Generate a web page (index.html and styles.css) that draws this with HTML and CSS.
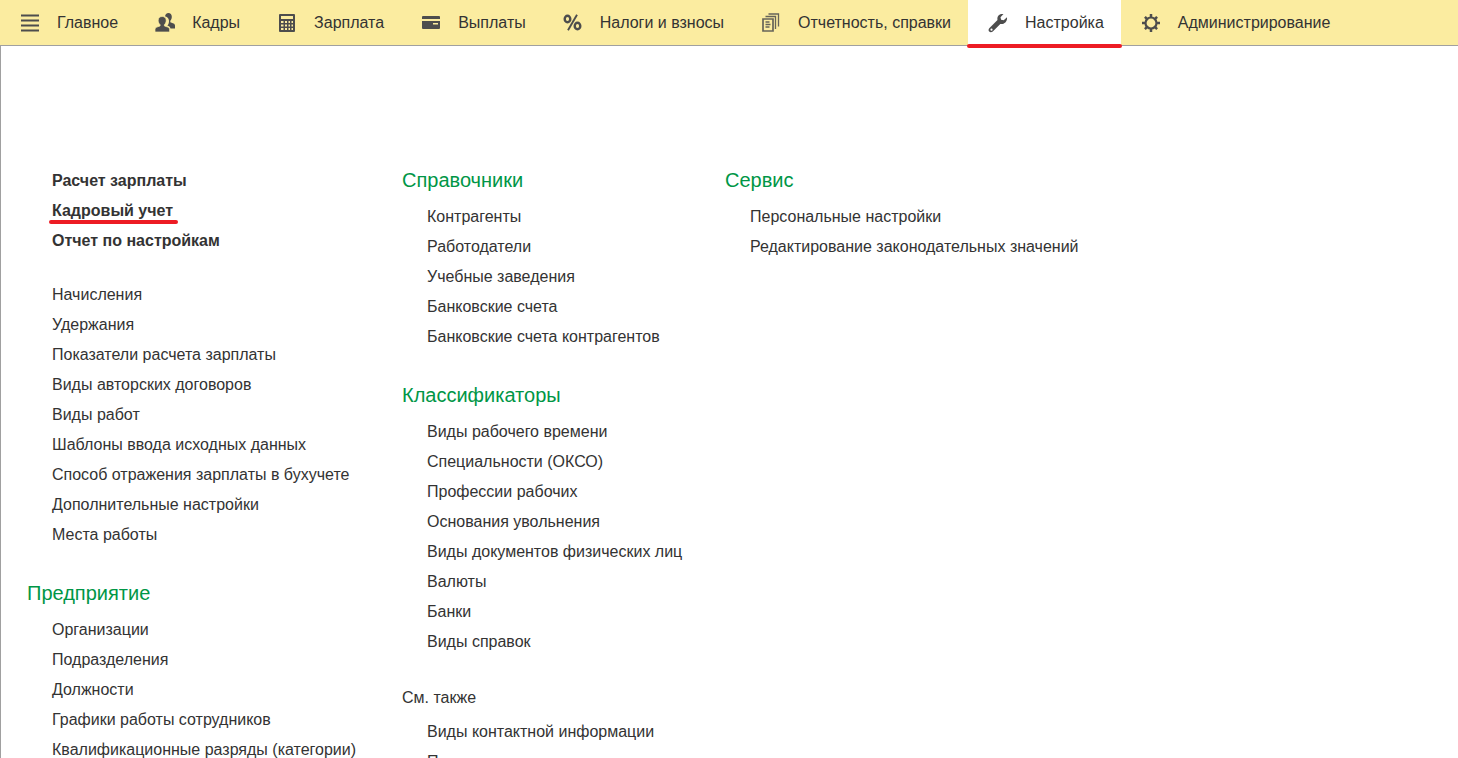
FILE: index.html
```html
<!DOCTYPE html>
<html lang="ru">
<head>
<meta charset="utf-8">
<title>Настройка</title>
<link rel="stylesheet" href="styles.css">
</head>
<body>
<nav class="sections">
  <a class="section" href="#"><svg class="icon" viewBox="0 0 20 20"><path d="M1 2.500h18M1 7.500h18M1 12.500h18M1 17.500h18" fill="none" stroke="currentColor" stroke-width="2"/></svg>Главное</a>
  <a class="section" href="#"><svg class="icon" viewBox="0 0 20 20"><g fill="currentColor"><path d="M10 3.200C10.500.7 12 0 13.200 0c2.300 0 3.600 1.500 3.600 3.800 0 1.700-.6 3.100-1.500 4v1.500l3.200 1.200c1.100.4 1.500 1.200 1.500 2.300v2.700h-4.500c-.5-1.600-1.500-2.300-3.100-2.900 1-.9 1.600-2.500 1.600-4.600 0-2.300-1.300-4.300-4-4.800z"/><path d="M7.200 3.500c2.400 0 4 1.500 4 3.800 0 1.900-.7 3.500-1.800 4.400v1.200l3.300 1.200c1.300.5 1.900 1.300 1.900 2.600V19H0v-2.300c0-1.300.7-2.100 1.900-2.600l3.200-1.200v-1.200c-1.200-.9-1.900-2.500-1.900-4.400 0-2.300 1.600-3.800 4-3.800z" stroke="#fbeca0" stroke-width=".7"/></g></svg>Кадры</a>
  <a class="section" href="#"><svg class="icon" viewBox="0 0 20 20"><path fill="currentColor" fill-rule="evenodd" d="M3 1h14q1 0 1 1v16q0 1-1 1H3q-1 0-1-1V2q0-1 1-1zM4 3v3h12V3zM4 8v2h2.500V8zM8 8v2h2V8zM11.500 8v2h1.500V8zM14.500 8v2H16V8zM4 11.500v2h2.500v-2zM8 11.500v2h2v-2zM11.500 11.500v2h1.500v-2zM14.500 11.500v2H16v-2zM4 15v2h2.500v-2zM8 15v2h2v-2zM11.500 15v2h1.500v-2zM14.500 15v2H16v-2z"/></svg>Зарплата</a>
  <a class="section" href="#"><svg class="icon" viewBox="0 0 20 20"><path fill="currentColor" fill-rule="evenodd" d="M2 3h16q1 0 1 1v2H1V4q0-1 1-1zM1 8h18v7q0 1-1 1H2q-1 0-1-1zM12 10v1.500h5V10z"/></svg>Выплаты</a>
  <a class="section" href="#"><svg class="icon" viewBox="0 0 20 20"><g fill="none" stroke="currentColor"><ellipse cx="4.500" cy="6" rx="2.800" ry="3.200" stroke-width="2.400"/><ellipse cx="14.500" cy="13" rx="2.800" ry="3.200" stroke-width="2.400"/><path d="M14 1.800l-9 15.400" stroke-width="1.900"/></g></svg>Налоги и взносы</a>
  <a class="section" href="#"><svg class="icon" viewBox="0 0 20 20"><g fill="none" stroke="currentColor" stroke-width="1.300" opacity=".85"><path d="M2 6h10v12H2z" stroke-width="1.700"/><path d="M4.500 3.500h10V16M7.500 1h10v12.500"/><path d="M4.500 9h4M4.500 11.500h5M4.500 14h4"/></g></svg>Отчетность, справки</a>
  <a class="section section-active" href="#" aria-current="page"><svg class="icon" viewBox="0 0 20 20"><path fill="currentColor" fill-rule="evenodd" d="M15.500 1c-4-.6-6.800 2-6 6L1.500 15c-2.600 2.800.8 5.800 3.300 3.500l7.500-7.600c4 .6 7.200-2.400 6.700-6.600l-3.300 3-2.600-.6-.6-2.500zM3.500 15.600a1.100 1.100 0 1 1 0 2.200a1.100 1.100 0 0 1 0-2.200z"/></svg>Настройка</a>
  <a class="section" href="#"><svg class="icon" viewBox="0 0 20 20"><g fill="none" stroke="currentColor"><circle cx="10" cy="10" r="5.500" stroke-width="2.200"/><path d="M10 1v3.500M10 15.500V19M1 10h3.500M15.500 10H19M3.900 3.900l2.300 2.300M13.800 13.800l2.300 2.300M16.100 3.900l-2.300 2.300M6.200 13.800l-2.300 2.300" stroke-width="2.500"/></g></svg>Администрирование</a>
</nav>
<main class="menu">
  <div class="column">
    <ul class="links links-main">
      <li><a href="#">Расчет зарплаты</a></li>
      <li><a class="marked" href="#">Кадровый учет</a></li>
      <li><a href="#">Отчет по настройкам</a></li>
    </ul>
    <ul class="links">
      <li><a href="#">Начисления</a></li>
      <li><a href="#">Удержания</a></li>
      <li><a href="#">Показатели расчета зарплаты</a></li>
      <li><a href="#">Виды авторских договоров</a></li>
      <li><a href="#">Виды работ</a></li>
      <li><a href="#">Шаблоны ввода исходных данных</a></li>
      <li><a href="#">Способ отражения зарплаты в бухучете</a></li>
      <li><a href="#">Дополнительные настройки</a></li>
      <li><a href="#">Места работы</a></li>
    </ul>
    <h2 class="title">Предприятие</h2>
    <ul class="links">
      <li><a href="#">Организации</a></li>
      <li><a href="#">Подразделения</a></li>
      <li><a href="#">Должности</a></li>
      <li><a href="#">Графики работы сотрудников</a></li>
      <li><a href="#">Квалификационные разряды (категории)</a></li>
    </ul>
  </div>
  <div class="column">
    <h2 class="title">Справочники</h2>
    <ul class="links">
      <li><a href="#">Контрагенты</a></li>
      <li><a href="#">Работодатели</a></li>
      <li><a href="#">Учебные заведения</a></li>
      <li><a href="#">Банковские счета</a></li>
      <li><a href="#">Банковские счета контрагентов</a></li>
    </ul>
    <h2 class="title">Классификаторы</h2>
    <ul class="links">
      <li><a href="#">Виды рабочего времени</a></li>
      <li><a href="#">Специальности (ОКСО)</a></li>
      <li><a href="#">Профессии рабочих</a></li>
      <li><a href="#">Основания увольнения</a></li>
      <li><a href="#">Виды документов физических лиц</a></li>
      <li><a href="#">Валюты</a></li>
      <li><a href="#">Банки</a></li>
      <li><a href="#">Виды справок</a></li>
    </ul>
    <h2 class="title title-also">См. также</h2>
    <ul class="links">
      <li><a href="#">Виды контактной информации</a></li>
      <li><a href="#">П</a></li>
    </ul>
  </div>
  <div class="column">
    <h2 class="title">Сервис</h2>
    <ul class="links">
      <li><a href="#">Персональные настройки</a></li>
      <li><a href="#">Редактирование законодательных значений</a></li>
    </ul>
  </div>
</main>
</body>
</html>
```
FILE: styles.css
```css
* {
  box-sizing: border-box;
}

body {
  display: flex;
  flex-direction: column;
  height: 100vh;
  margin: 0;
  overflow: hidden;
  background: #fff;
  color: #333;
  font: 16px/30px "Liberation Sans", Arial, sans-serif;
}

a {
  color: inherit;
  text-decoration: none;
}

.sections {
  display: flex;
  flex: none;
  background: #fbeca0;
  border-bottom: 1px solid #a0a0a0;
  white-space: nowrap;
}

.section {
  position: relative;
  display: flex;
  align-items: center;
  height: 45px;
  padding: 0 17px 0 20px;
}

.section-active {
  background: #fff;
}

.section-active::after,
.marked::after {
  content: "";
  position: absolute;
  height: 4px;
  border-radius: 2px;
  background: #ed1c24;
}

.section-active::after {
  right: -1px;
  bottom: -3px;
  left: -1px;
}

.icon {
  width: 20px;
  height: 20px;
  margin-right: 17px;
  color: #4d4d4d;
}

.menu {
  display: grid;
  flex: 1;
  grid-template-columns: 375px 323px auto;
  align-items: start;
  min-height: 0;
  padding: 119px 26px 0;
  overflow: hidden;
  border-left: 1px solid #a0a0a0;
  white-space: nowrap;
}

.links {
  margin: 0;
  padding: 1px 0 0 25px;
  list-style: none;
}

.links-main {
  margin-bottom: 23px;
  font-weight: bold;
}

.marked {
  position: relative;
}

.marked::after {
  right: -5px;
  bottom: -5px;
  left: -3px;
}

.title {
  margin: 0 0 6px;
  color: #009646;
  font-size: 20px;
  font-weight: normal;
}

.links + .title {
  margin-top: 28px;
}

.links + .title-also {
  margin: 26px 0 3px;
  color: inherit;
  font-size: 16px;
}
```
